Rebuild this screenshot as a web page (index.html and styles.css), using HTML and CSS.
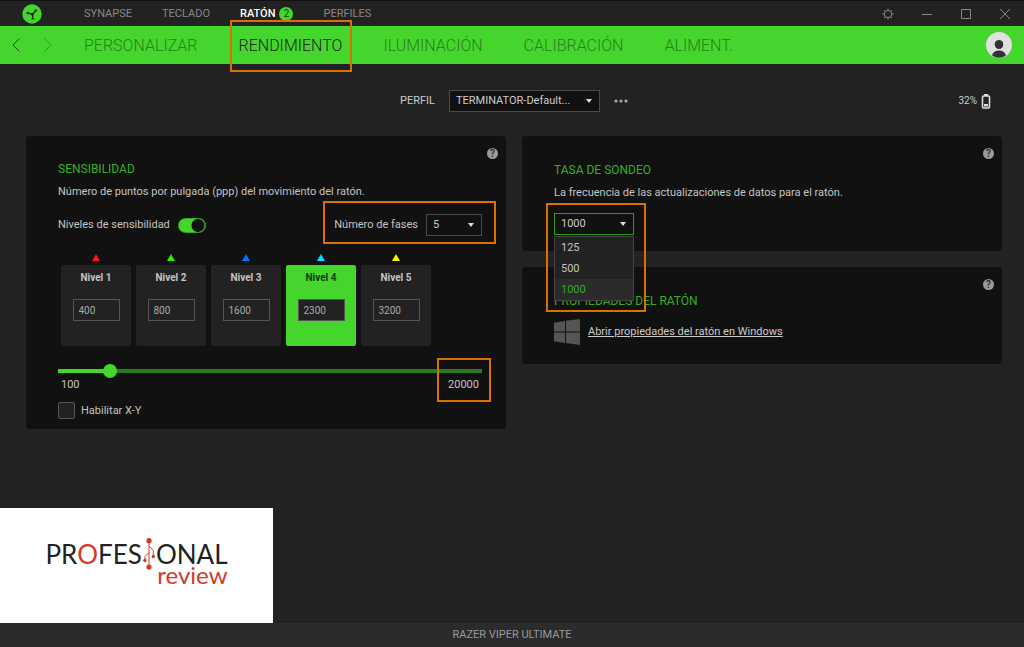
FILE: index.html
```html
<!DOCTYPE html>
<html lang="es">
<head>
<meta charset="utf-8">
<title>Razer Synapse</title>
<link rel="stylesheet" href="styles.css">
</head>
<body>
<header class="titlebar">
  <svg class="brand" viewBox="0 0 20 20" width="20" height="20" aria-hidden="true">
    <circle cx="10" cy="10" r="9.700" fill="#44d62c"/>
    <path d="M10.500 10.300L14 6.500M10.500 10.300L5.500 8.500M10.500 10.300L11 15" stroke="#16300f" stroke-width="1.300" fill="none"/>
    <circle cx="10.400" cy="10.200" r="1.500" fill="#16300f"/>
    <path d="M12.800 5.600L15 7.300M4.700 8Q5.200 9.600 6.800 10.100M9.600 15.100L12.200 14.500" stroke="#16300f" stroke-width="1.300" fill="none"/>
  </svg>
  <nav class="modules">
    <a href="#">SYNAPSE</a>
    <a href="#">TECLADO</a>
    <a href="#" class="current">RATÓN<span class="badge">2</span></a>
    <a href="#">PERFILES</a>
  </nav>
  <div class="window-buttons">
    <button type="button" aria-label="Configuración">
      <svg viewBox="0 0 12 12" width="12" height="12"><circle cx="6" cy="6" r="3.700"/><path d="M6 .4v2M6 9.600v2M.4 6h2M9.600 6h2M2 2l1.400 1.400M8.600 8.600L10 10M10 2L8.600 3.400M3.400 8.600L2 10"/></svg>
    </button>
    <button type="button" aria-label="Minimizar">
      <svg viewBox="0 0 12 12" width="12" height="12"><path d="M1 6.500h10"/></svg>
    </button>
    <button type="button" aria-label="Maximizar">
      <svg viewBox="0 0 12 12" width="12" height="12"><path d="M1.500 1.500h9v9h-9z"/></svg>
    </button>
    <button type="button" aria-label="Cerrar">
      <svg viewBox="0 0 12 12" width="12" height="12"><path d="M1 1l10 10M11 1L1 11"/></svg>
    </button>
  </div>
</header>

<div class="tabbar">
  <div class="history">
    <button type="button" aria-label="Atrás"><svg viewBox="0 0 8 14" width="8" height="14"><path d="M7.500 .5L1 7l6.500 6.500"/></svg></button>
    <button type="button" aria-label="Adelante" disabled><svg viewBox="0 0 8 14" width="8" height="14"><path d="M.5 .5L7 7L.5 13.500"/></svg></button>
  </div>
  <nav class="tabs">
    <a href="#">PERSONALIZAR</a>
    <a href="#" class="current marked">RENDIMIENTO</a>
    <a href="#">ILUMINACIÓN</a>
    <a href="#">CALIBRACIÓN</a>
    <a href="#">ALIMENT.</a>
  </nav>
  <button type="button" class="avatar" aria-label="Cuenta">
    <svg viewBox="0 0 26 26" width="26" height="26"><circle cx="13" cy="13" r="13" fill="#e0e0e0"/><ellipse cx="13" cy="12.500" rx="4.300" ry="4.600" fill="#333"/><path d="M6 23.500 Q7.500 18.500 13 18.500 Q18.500 18.500 20 23.500 Q13 28 6 23.500z" fill="#333"/></svg>
  </button>
</div>

<main class="page">
  <div class="profile">
    <div class="picker">
      <label for="profile">PERFIL</label>
      <span class="select-box wide">
        <select id="profile"><option>TERMINATOR-Default...</option></select>
      </span>
      <button type="button" class="more" aria-label="Más"><svg viewBox="0 0 14 4" width="14" height="4"><circle cx="2" cy="2" r="1.600"/><circle cx="7" cy="2" r="1.600"/><circle cx="12" cy="2" r="1.600"/></svg></button>
    </div>
    <div class="battery">32%
      <svg viewBox="0 0 10 15" width="10" height="15" aria-hidden="true"><path d="M3 0h4v2H3z" fill="#ddd"/><rect x="1.500" y="2" width="7" height="12" rx="1" fill="none" stroke="#ddd" stroke-width="1.600"/><path d="M3 10h4v2.500H3z" fill="#ddd"/></svg>
    </div>
  </div>

  <div class="cards">
    <section class="card">
      <button type="button" class="help" aria-label="Ayuda">?</button>
      <h2>SENSIBILIDAD</h2>
      <p>Número de puntos por pulgada (ppp) del movimiento del ratón.</p>
      <div class="stage-row">
        <label class="toggle">Niveles de sensibilidad<input type="checkbox" role="switch" checked></label>
        <div class="stages marked">
          <label for="stages">Número de fases</label>
          <span class="select-box short"><select id="stages"><option>5</option></select></span>
        </div>
      </div>
      <div class="levels">
        <div class="level red"><label for="l1">Nivel 1</label><input id="l1" type="text" value="400"></div>
        <div class="level green"><label for="l2">Nivel 2</label><input id="l2" type="text" value="800"></div>
        <div class="level blue"><label for="l3">Nivel 3</label><input id="l3" type="text" value="1600"></div>
        <div class="level cyan active"><label for="l4">Nivel 4</label><input id="l4" type="text" value="2300"></div>
        <div class="level yellow"><label for="l5">Nivel 5</label><input id="l5" type="text" value="3200"></div>
      </div>
      <input type="range" class="slider" min="100" max="20000" step="100" value="2300" aria-label="Sensibilidad">
      <div class="scale"><span>100</span><span class="marked">20000</span></div>
      <label class="check"><input type="checkbox">Habilitar X-Y</label>
    </section>

    <div class="column">
      <section class="card polling">
        <button type="button" class="help" aria-label="Ayuda">?</button>
        <h2>TASA DE SONDEO</h2>
        <p>La frecuencia de las actualizaciones de datos para el ratón.</p>
        <div class="rate marked">
          <span class="select-box open"><select aria-label="Tasa de sondeo"><option>1000</option></select></span>
          <ul class="menu" role="listbox">
            <li role="option">125</li>
            <li role="option">500</li>
            <li role="option" aria-selected="true">1000</li>
          </ul>
        </div>
      </section>
      <section class="card mouse">
        <button type="button" class="help" aria-label="Ayuda">?</button>
        <h2>PROPIEDADES DEL RATÓN</h2>
        <div class="windows">
          <svg viewBox="0 0 26 26" width="26" height="26" aria-hidden="true"><path d="M0 3.700L11 2v10.500H0zM12 1.800L26 0v12.500H12zM0 13.500h11V24L0 22.300zM12 13.500h14V26l-14-1.900z" fill="#555"/></svg>
          <a href="#">Abrir propiedades del ratón en Windows</a>
        </div>
      </section>
    </div>
  </div>

  <div class="watermark">
    <div class="logo">
      <div class="logo-top"><span>PR<em>O</em>FES</span><svg viewBox="0 0 12 32" width="12" height="32" aria-hidden="true"><g fill="#d03a2b" stroke="none"><circle cx="6" cy="2.700" r="2.600"/><circle cx="6" cy="29" r="2.600"/><circle cx="1.900" cy="22.500" r="1.700"/><circle cx="10.300" cy="18.500" r="1.700"/></g><path d="M6 3v26M6 14.500l-4 4v4M6 8l4.300 4.500V19" fill="none" stroke="#d03a2b"/></svg><span>ONAL</span></div>
      <div class="logo-bottom">review</div>
    </div>
  </div>
</main>

<footer class="device">RAZER VIPER ULTIMATE</footer>
</body>
</html>
```
FILE: styles.css
```css
* { box-sizing: border-box; }

body {
  margin: 0;
  min-height: 100vh;
  display: flex;
  flex-direction: column;
  background: #222;
  color: #c4c4c4;
  font-family: Roboto, "Liberation Sans", sans-serif;
  font-size: 11px;
  line-height: 16px;
}

button {
  padding: 0;
  border: 0;
  background: none;
  color: inherit;
  font: inherit;
  display: grid;
  place-items: center;
}

a { color: inherit; text-decoration: none; }

.marked { position: relative; }
.marked::after {
  content: "";
  position: absolute;
  border: 2px solid #d97000;
  pointer-events: none;
}

/* Title bar */
.titlebar {
  height: 26px;
  display: flex;
  align-items: center;
  padding: 0 13px 0 22px;
  border-top: 1px solid #111;
}
.modules {
  display: flex;
  gap: 30px;
  margin-left: 42px;
  color: #888;
}
.modules a { display: flex; align-items: center; }
.modules .current { color: #fff; font-weight: 500; }
.badge {
  width: 14px;
  height: 14px;
  margin-left: 4px;
  border-radius: 50%;
  background: #44d62c;
  color: #17420f;
  font-size: 10px;
  line-height: 14px;
  text-align: center;
  font-weight: 400;
}
.window-buttons { display: flex; gap: 27px; margin-left: auto; }
.window-buttons svg { fill: none; stroke: #888; }

/* Tab bar */
.tabbar {
  height: 38px;
  display: flex;
  align-items: center;
  padding: 0 12px;
  background: #44d62c;
}
.history { display: flex; gap: 24px; }
.history svg { fill: none; stroke: #175010; }
.history button:disabled { opacity: .4; }
.tabs {
  display: flex;
  gap: 41px;
  margin-left: 32px;
  padding-top: 1px;
  color: #2b7e20;
  font-size: 16px;
  font-weight: 300;
  line-height: 24px;
}
.tabs .current { color: #222; }
.tabs .marked::after { inset: -14px -10px -14px -9px; }
.avatar { margin-left: auto; }

/* Page */
.page {
  flex: 1;
  position: relative;
  padding: 26px 22px 16px 26px;
}
.profile {
  display: grid;
  grid-template-columns: 1fr auto 1fr;
  align-items: center;
  height: 22px;
  margin-bottom: 24px;
  color: #ccc;
}
.picker {
  grid-column: 2;
  display: flex;
  align-items: center;
  gap: 14px;
}
.more { fill: #aaa; }
.battery {
  display: flex;
  align-items: center;
  justify-self: end;
  gap: 4px;
  padding-right: 11px;
  font-size: 10px;
}

.select-box {
  position: relative;
  display: block;
}
.select-box::after {
  content: "";
  position: absolute;
  right: 8px;
  top: 9px;
  border: 3px solid transparent;
  border-top: 4px solid #ddd;
  border-bottom: 0;
  pointer-events: none;
}
.select-box select {
  display: block;
  width: 100%;
  height: 22px;
  padding: 0 6px;
  border: 1px solid #4a4a4a;
  border-radius: 0;
  background: #111;
  color: #ccc;
  font: inherit;
  appearance: none;
}
.wide { width: 151px; }
.short { width: 56px; }
.open { width: 80px; }
.open select { border-color: #2c9a1d; }

.cards {
  display: grid;
  grid-template-columns: 1fr 1fr;
  gap: 16px;
  align-items: start;
}
.column { display: grid; gap: 16px; }
.card {
  position: relative;
  padding: 25px 24px 10px 32px;
  border-radius: 4px;
  background: #111;
}
.card h2 {
  margin: 0 0 7px;
  color: #36b022;
  font-size: 12px;
  font-weight: 400;
  line-height: 16px;
}
.card p { margin: 0; }
.help {
  position: absolute;
  top: 12px;
  right: 8px;
  width: 11px;
  height: 11px;
  border-radius: 50%;
  background: #999;
  color: #222;
  font-size: 10px;
  font-weight: 500;
  line-height: 11px;
}

.stage-row {
  display: flex;
  align-items: center;
  justify-content: space-between;
  margin-top: 14px;
}
.toggle { display: flex; align-items: center; gap: 8px; }
.toggle input {
  width: 28px;
  height: 15px;
  margin: 0;
  border: 1px solid #36a823;
  border-radius: 8px;
  background: radial-gradient(circle at 19px 50%, #111 6px, #44d62c 7px);
  appearance: none;
}
.stages { display: flex; align-items: center; gap: 8px; }
.stages.marked::after { inset: -13px -14px -8px -11px; }

.levels {
  display: flex;
  gap: 5px;
  margin: 29px 0 0 3px;
}
.level {
  position: relative;
  display: flex;
  flex-direction: column;
  align-items: center;
  gap: 13px;
  width: 70px;
  height: 81px;
  padding-top: 5px;
  border-radius: 2px;
  background: #222;
  font-size: 10px;
}
.level::before {
  content: "";
  position: absolute;
  top: -11px;
  border: 4px solid transparent;
  border-top: 0;
  border-bottom: 7px solid var(--mark);
}
.red { --mark: #f21818; }
.green { --mark: #2bf200; }
.blue { --mark: #0870ff; }
.cyan { --mark: #00dfff; }
.yellow { --mark: #fff000; }
.level label { font-weight: 700; }
.level input {
  width: 47px;
  height: 22px;
  padding: 0 5px;
  border: 1px solid #555;
  background: #222;
  color: #aaa;
  font: inherit;
}
.level.active { background: #44d62c; }
.active label { color: #12400b; }

.slider {
  display: block;
  width: 100%;
  height: 14px;
  margin: 18px 0 0;
  border-radius: 2px;
  background: linear-gradient(90deg, #44d62c 12%, #2a7a1e 12%) center / 100% 4px no-repeat;
  appearance: none;
}
.slider::-webkit-slider-thumb {
  width: 14px;
  height: 14px;
  border-radius: 50%;
  background: #44d62c;
  appearance: none;
}
.scale {
  display: flex;
  justify-content: space-between;
  padding: 0 3px;
  line-height: 14px;
}
.scale .marked::after { inset: -20px -12px -10px -11px; }
.check { display: flex; align-items: center; gap: 6px; margin-top: 10px; }
.check input {
  width: 17px;
  height: 17px;
  margin: 0;
  border: 1px solid #555;
  border-radius: 2px;
  background: #222;
  appearance: none;
}

.polling { padding: 26px 24px 16px 32px; }
.rate { width: 80px; margin-top: 12px; }
.rate.marked::after { inset: -10px -12px -77px -8px; z-index: 3; }
.menu {
  position: absolute;
  z-index: 2;
  top: 23px;
  left: 0;
  right: 0;
  margin: 0;
  padding: 0;
  list-style: none;
  border: 1px solid #444;
  background: #222;
}
.menu li { padding: 0 6px; line-height: 21px; }
.menu [aria-selected] { background: #2b2b2b; color: #36a823; }
.mouse { padding: 26px 24px 11px 32px; }
.windows { display: flex; align-items: center; gap: 8px; margin: 10px 0 8px; }
.windows a { text-decoration: underline; color: #ccc; }

/* Watermark */
.watermark {
  position: absolute;
  left: 0;
  bottom: 0;
  width: 273px;
  height: 115px;
  display: grid;
  place-content: center;
  background: #fff;
  color: #222;
  font-family: Lato, sans-serif;
}
.logo-top {
  display: flex;
  align-items: center;
  gap: 1px;
  height: 22px;
  font-size: 26px;
  line-height: 22px;
}
.logo-top svg { flex: none; }
.logo-top em { color: #d03a2b; font-style: normal; }
.logo-bottom {
  padding-bottom: 4px;
  color: #d03a2b;
  font-size: 24px;
  line-height: 20px;
  text-align: right;
}

.device {
  height: 24px;
  background: #2b2b2b;
  color: #999;
  line-height: 24px;
  text-align: center;
}
```
